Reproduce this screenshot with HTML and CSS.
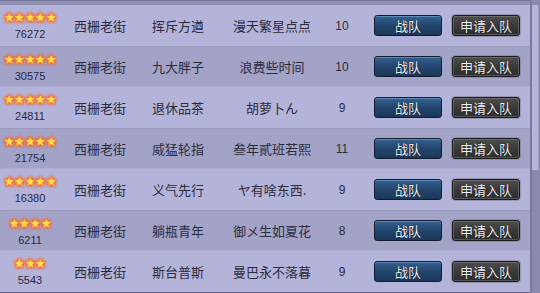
FILE: index.html
```html
<!DOCTYPE html>
<html lang="zh-CN">
<head>
    <meta charset="UTF-8">
    <meta name="viewport" content="width=device-width, initial-scale=1.0">
    <title>战队列表</title>
    <link rel="stylesheet" href="styles.css">
</head>
<body>
    <svg class="defs" width="0" height="0">
        <defs>
            <polygon id="star" points="5.5,0.3 7.0,3.7 10.7,4.0 7.9,6.5 8.8,10.2 5.5,8.3 2.2,10.2 3.1,6.5 0.3,4.0 4.0,3.7"/>
        </defs>
    </svg>
    <div class="panel">
        <div class="list">
            <div class="row light">
                <div class="rank">
                    <div class="stars">
                        <svg class="star" viewBox="0 0 11 11"><use href="#star"/></svg>
                        <svg class="star" viewBox="0 0 11 11"><use href="#star"/></svg>
                        <svg class="star" viewBox="0 0 11 11"><use href="#star"/></svg>
                        <svg class="star" viewBox="0 0 11 11"><use href="#star"/></svg>
                        <svg class="star" viewBox="0 0 11 11"><use href="#star"/></svg>
                    </div>
                    <div class="score">76272</div>
                </div>
                <div class="cell">西栅老街</div>
                <div class="cell">挥斥方遒</div>
                <div class="cell">漫天繁星点点</div>
                <div class="cell num">10</div>
                <div class="actions">
                    <button class="btn team">战队</button>
                    <button class="btn join">申请入队</button>
                </div>
            </div>
            <div class="row dark">
                <div class="rank">
                    <div class="stars">
                        <svg class="star" viewBox="0 0 11 11"><use href="#star"/></svg>
                        <svg class="star" viewBox="0 0 11 11"><use href="#star"/></svg>
                        <svg class="star" viewBox="0 0 11 11"><use href="#star"/></svg>
                        <svg class="star" viewBox="0 0 11 11"><use href="#star"/></svg>
                        <svg class="star" viewBox="0 0 11 11"><use href="#star"/></svg>
                    </div>
                    <div class="score">30575</div>
                </div>
                <div class="cell">西栅老街</div>
                <div class="cell">九大胖子</div>
                <div class="cell">浪费些时间</div>
                <div class="cell num">10</div>
                <div class="actions">
                    <button class="btn team">战队</button>
                    <button class="btn join">申请入队</button>
                </div>
            </div>
            <div class="row light">
                <div class="rank">
                    <div class="stars">
                        <svg class="star" viewBox="0 0 11 11"><use href="#star"/></svg>
                        <svg class="star" viewBox="0 0 11 11"><use href="#star"/></svg>
                        <svg class="star" viewBox="0 0 11 11"><use href="#star"/></svg>
                        <svg class="star" viewBox="0 0 11 11"><use href="#star"/></svg>
                        <svg class="star" viewBox="0 0 11 11"><use href="#star"/></svg>
                    </div>
                    <div class="score">24811</div>
                </div>
                <div class="cell">西栅老街</div>
                <div class="cell">退休品茶</div>
                <div class="cell">胡萝卜ん</div>
                <div class="cell num">9</div>
                <div class="actions">
                    <button class="btn team">战队</button>
                    <button class="btn join">申请入队</button>
                </div>
            </div>
            <div class="row dark">
                <div class="rank">
                    <div class="stars">
                        <svg class="star" viewBox="0 0 11 11"><use href="#star"/></svg>
                        <svg class="star" viewBox="0 0 11 11"><use href="#star"/></svg>
                        <svg class="star" viewBox="0 0 11 11"><use href="#star"/></svg>
                        <svg class="star" viewBox="0 0 11 11"><use href="#star"/></svg>
                        <svg class="star" viewBox="0 0 11 11"><use href="#star"/></svg>
                    </div>
                    <div class="score">21754</div>
                </div>
                <div class="cell">西栅老街</div>
                <div class="cell">威猛轮指</div>
                <div class="cell">叁年貳班若熙</div>
                <div class="cell num">11</div>
                <div class="actions">
                    <button class="btn team">战队</button>
                    <button class="btn join">申请入队</button>
                </div>
            </div>
            <div class="row light">
                <div class="rank">
                    <div class="stars">
                        <svg class="star" viewBox="0 0 11 11"><use href="#star"/></svg>
                        <svg class="star" viewBox="0 0 11 11"><use href="#star"/></svg>
                        <svg class="star" viewBox="0 0 11 11"><use href="#star"/></svg>
                        <svg class="star" viewBox="0 0 11 11"><use href="#star"/></svg>
                        <svg class="star" viewBox="0 0 11 11"><use href="#star"/></svg>
                    </div>
                    <div class="score">16380</div>
                </div>
                <div class="cell">西栅老街</div>
                <div class="cell">义气先行</div>
                <div class="cell">ヤ有啥东西.</div>
                <div class="cell num">9</div>
                <div class="actions">
                    <button class="btn team">战队</button>
                    <button class="btn join">申请入队</button>
                </div>
            </div>
            <div class="row dark">
                <div class="rank">
                    <div class="stars">
                        <svg class="star" viewBox="0 0 11 11"><use href="#star"/></svg>
                        <svg class="star" viewBox="0 0 11 11"><use href="#star"/></svg>
                        <svg class="star" viewBox="0 0 11 11"><use href="#star"/></svg>
                        <svg class="star" viewBox="0 0 11 11"><use href="#star"/></svg>
                    </div>
                    <div class="score">6211</div>
                </div>
                <div class="cell">西栅老街</div>
                <div class="cell">躺瓶青年</div>
                <div class="cell">御メ生如夏花</div>
                <div class="cell num">8</div>
                <div class="actions">
                    <button class="btn team">战队</button>
                    <button class="btn join">申请入队</button>
                </div>
            </div>
            <div class="row light">
                <div class="rank">
                    <div class="stars">
                        <svg class="star" viewBox="0 0 11 11"><use href="#star"/></svg>
                        <svg class="star" viewBox="0 0 11 11"><use href="#star"/></svg>
                        <svg class="star" viewBox="0 0 11 11"><use href="#star"/></svg>
                    </div>
                    <div class="score">5543</div>
                </div>
                <div class="cell">西栅老街</div>
                <div class="cell">斯台普斯</div>
                <div class="cell">曼巴永不落暮</div>
                <div class="cell num">9</div>
                <div class="actions">
                    <button class="btn team">战队</button>
                    <button class="btn join">申请入队</button>
                </div>
            </div>
        </div>
        <div class="scrollbar">
            <div class="thumb"></div>
        </div>
    </div>
</body>
</html>
```

FILE: styles.css
```css
body {
    margin: 0;
    font-family: 'Liberation Sans', 'Noto Sans CJK SC', sans-serif;
    background-color: #b4b4da;
}
.defs {
    position: absolute;
}
.panel {
    display: flex;
    width: 540px;
    height: 293px;
    background-color: #8f8fb3;
    padding-top: 4px;
    box-sizing: border-box;
    border-top: 1px solid #77779c;
}
.list {
    width: 530px;
    display: flex;
    flex-direction: column;
    border-bottom: 2px solid #5e5e86;
}
.row {
    display: grid;
    grid-template-columns: 60px 80px 76px 112px 28px 1fr;
    align-items: center;
    height: 41px;
    flex-shrink: 0;
}
.row.light {
    background-color: #b4b4da;
}
.row.dark {
    background-color: #a3a3c8;
    border-top: 1px solid #9a9abf;
    border-bottom: 1px solid #aeaed4;
    box-sizing: border-box;
}
.rank {
    display: flex;
    flex-direction: column;
    align-items: center;
    align-self: start;
    padding-top: 7px;
}
.stars {
    display: flex;
    height: 11px;
}
.star {
    width: 10.6px;
    height: 11px;
    fill: #ffe055;
    stroke: #f58a28;
    stroke-width: 0.7;
    filter: drop-shadow(0 0 1.5px #ff4a22) drop-shadow(0 0 1px rgba(255, 110, 60, 0.9));
}
.score {
    font-size: 11px;
    line-height: 14px;
    margin-top: 4px;
    color: #2a2a3c;
}
.cell {
    text-align: center;
    font-size: 13px;
    color: #2c2c3c;
    font-family: 'Noto Sans CJK SC', sans-serif;
    white-space: nowrap;
}
.cell.num {
    font-family: 'Liberation Sans', sans-serif;
    font-size: 12px;
}
.actions {
    display: flex;
    gap: 10px;
    padding-left: 18px;
}
.btn {
    width: 68px;
    height: 21px;
    padding: 0;
    font-family: 'Noto Sans CJK SC', sans-serif;
    font-size: 13px;
    line-height: 19px;
    color: #f0f0f6;
    border-radius: 3px;
    text-shadow: 0 0 1px #000;
}
.btn.team {
    background: linear-gradient(#34618f, #22436b 55%, #1b3859);
    border: 1px solid #111c30;
    box-shadow: inset 0 1px 0 rgba(150, 190, 230, 0.45);
}
.btn.join {
    background: linear-gradient(#4e4e4e, #383838 55%, #2e2e2e);
    border: 1px solid #1b1b1b;
    box-shadow: inset 0 0 0 1px rgba(160, 160, 160, 0.35), 0 0 0 1px rgba(120, 120, 140, 0.5);
}
.scrollbar {
    width: 10px;
    background-color: #8a8aae;
    border-left: 2px solid #7a7aa0;
    box-sizing: border-box;
    margin-top: -5px;
    padding-top: 5px;
}
.thumb {
    height: 165px;
    width: 6px;
    background-color: #b6b6da;
    border-right: 1px solid #9c9cc2;
}
```
